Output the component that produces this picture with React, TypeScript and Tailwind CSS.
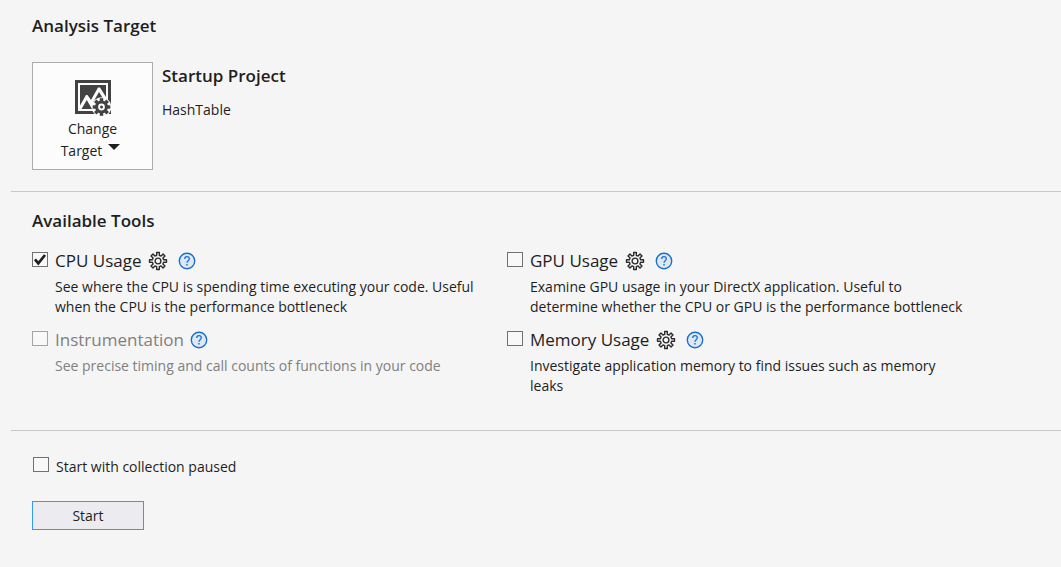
import { useState } from "react";

const GEAR_POINTS = Array.from({ length: 8 }, (_, tooth) => {
  const corners: [number, number][] = [
    [-13, 5.8],
    [-9, 8.6],
    [9, 8.6],
    [13, 5.8],
  ];
  return corners
    .map(([offset, radius]) => {
      const angle = ((tooth * 45 + offset) * Math.PI) / 180;
      return `${(10 + radius * Math.sin(angle)).toFixed(2)},${(10 - radius * Math.cos(angle)).toFixed(2)}`;
    })
    .join(" ");
}).join(" ");

function GearIcon() {
  return (
    <svg viewBox="0 0 20 20" className="size-5" fill="none" stroke="#2b2b2b" strokeWidth="1.4" aria-hidden="true">
      <polygon points={GEAR_POINTS} strokeLinejoin="round" />
      <circle cx="10" cy="10" r="2.9" />
    </svg>
  );
}

function HelpIcon() {
  return (
    <svg viewBox="0 0 18 18" className="size-[18px]" fill="none" aria-hidden="true">
      <circle cx="9" cy="9" r="7.7" fill="#dce8f5" stroke="#1a6fc9" strokeWidth="1.4" />
      <path d="M6.700 7C6.700 5.500 7.700 4.700 9 4.700s2.300.8 2.300 2.100c0 1-.6 1.500-1.300 2.100-.7.6-1 .9-1 1.900" stroke="#1a6fc9" strokeWidth="1.3" />
      <rect x="8.300" y="12" width="1.400" height="1.500" fill="#1a6fc9" />
    </svg>
  );
}

function TargetIcon() {
  return (
    <svg viewBox="0 0 36 36" className="size-9" aria-hidden="true">
      <path d="M0 0h36v34H0z" fill="#424242" />
      <path d="M3 3h30v28H3z" fill="#fcfcfc" />
      <path d="M5 5h26v24H5z" fill="#424242" />
      <path d="M5 25.500l6-10.500h1.500l3.500 5L23 7.500h2L31 17V29H5z" fill="#fcfcfc" />
      <path d="M6.500 29l5.300-9L17 29z" fill="#424242" />
      <path d="M18 22.500l6-10.500 5 8-6 10h-2.500z" fill="#424242" />
      <circle cx="26.500" cy="27" r="9.800" fill="#fcfcfc" />
      <g transform="translate(26.500 27)">
        <circle r="6.500" fill="#424242" />
        {[0, 45, 90, 135].map((angle) => (
          <rect key={angle} x="-1.700" y="-8.800" width="3.400" height="17.600" fill="#424242" transform={`rotate(${angle})`} />
        ))}
        <circle r="3.400" fill="#fcfcfc" />
        <circle r="1.500" fill="#424242" />
      </g>
    </svg>
  );
}

type CheckboxProps = {
  id: string;
  checked: boolean;
  disabled?: boolean;
  onChange: (checked: boolean) => void;
};

function Checkbox({ id, checked, disabled, onChange }: CheckboxProps) {
  return (
    <span className="grid h-[18px] w-4 shrink-0">
      <input
        id={id}
        type="checkbox"
        checked={checked}
        disabled={disabled}
        onChange={(event) => onChange(event.target.checked)}
        className="col-start-1 row-start-1 h-[15px] w-4 appearance-none border border-[#717171] bg-[#fcfcfc]/40 disabled:border-[#a2a4a5]"
      />
      {checked && (
        <svg viewBox="0 0 16 15" className="pointer-events-none col-start-1 row-start-1 h-[15px] w-4" aria-hidden="true">
          <path d="M3 7.300l3.300 4L13 3" fill="none" stroke="#1e1e1e" strokeWidth="2.700" />
        </svg>
      )}
    </span>
  );
}

type Tool = {
  id: string;
  name: string;
  description: string;
  configurable: boolean;
  available: boolean;
};

const TOOLS: Tool[] = [
  {
    id: "cpu",
    name: "CPU Usage",
    description:
      "See where the CPU is spending time executing your code. Useful when the CPU is the performance bottleneck",
    configurable: true,
    available: true,
  },
  {
    id: "gpu",
    name: "GPU Usage",
    description:
      "Examine GPU usage in your DirectX application. Useful to determine whether the CPU or GPU is the performance bottleneck",
    configurable: true,
    available: true,
  },
  {
    id: "instrumentation",
    name: "Instrumentation",
    description: "See precise timing and call counts of functions in your code",
    configurable: false,
    available: false,
  },
  {
    id: "memory",
    name: "Memory Usage",
    description: "Investigate application memory to find issues such as memory leaks",
    configurable: true,
    available: true,
  },
];

export default function App() {
  const [selected, setSelected] = useState<Record<string, boolean>>({ cpu: true });
  const [paused, setPaused] = useState(false);

  return (
    <main className="min-h-screen bg-[#f5f5f5] pl-[11px] font-['Open_Sans','Noto_Sans',sans-serif] text-sm text-[#1e1e1e]">
      <section className="border-b border-[#c8c8c8] pt-3.5 pr-5 pb-[21px] pl-[21px]">
        <h2 className="text-[17px] leading-6 font-semibold">Analysis Target</h2>
        <div className="mt-6 flex gap-[9px]">
          <button
            type="button"
            className="flex h-[108px] w-[121px] flex-col items-center border border-[#acacac] bg-[#fcfcfc] pt-[17px] leading-[22px]"
          >
            <TargetIcon />
            <span className="mt-0.5">Change</span>
            <span className="flex items-center gap-1.5 pr-1">
              Target
              <svg viewBox="0 0 12 6" className="mb-2 h-1.5 w-3" aria-hidden="true">
                <path d="M0 0h12L6 6z" fill="#1e1e1e" />
              </svg>
            </span>
          </button>
          <div className="pt-0.5">
            <h3 className="text-[17px] leading-6 font-semibold">Startup Project</h3>
            <p className="mt-3 leading-5">HashTable</p>
          </div>
        </div>
      </section>

      <section className="border-b border-[#c8c8c8] pt-[17px] pb-[34px] pl-[21px]">
        <h2 className="text-[17px] leading-6 font-semibold">Available Tools</h2>
        <div className="mt-4 grid max-w-[950px] grid-cols-2 gap-y-[11px]">
          {TOOLS.map((tool) => (
            <div key={tool.id} className={tool.available ? "" : "text-[#808080]"}>
              <div className="flex h-6 items-center">
                <Checkbox
                  id={tool.id}
                  checked={Boolean(selected[tool.id])}
                  disabled={!tool.available}
                  onChange={(checked) => setSelected({ ...selected, [tool.id]: checked })}
                />
                <label htmlFor={tool.id} className="ml-[7px] text-[17px] leading-6">
                  {tool.name}
                </label>
                {tool.configurable && (
                  <button type="button" aria-label={`${tool.name} settings`} className="mr-1 ml-[7px]">
                    <GearIcon />
                  </button>
                )}
                <a href="#help" aria-label={`${tool.name} help`} className="ml-1.5">
                  <HelpIcon />
                </a>
              </div>
              <p className="mt-1 pr-4 pl-[23px] leading-5">{tool.description}</p>
            </div>
          ))}
        </div>
      </section>

      <section className="pt-[26px] pb-9 pl-[21px]">
        <div className="flex h-5 items-start gap-[7px] pl-px">
          <Checkbox id="paused" checked={paused} onChange={setPaused} />
          <label htmlFor="paused" className="leading-5">
            Start with collection paused
          </label>
        </div>
        <button
          type="button"
          className="mt-6 h-[29px] w-28 border border-[#3399ff] bg-[#ececf0] leading-5"
        >
          Start
        </button>
      </section>
    </main>
  );
}
